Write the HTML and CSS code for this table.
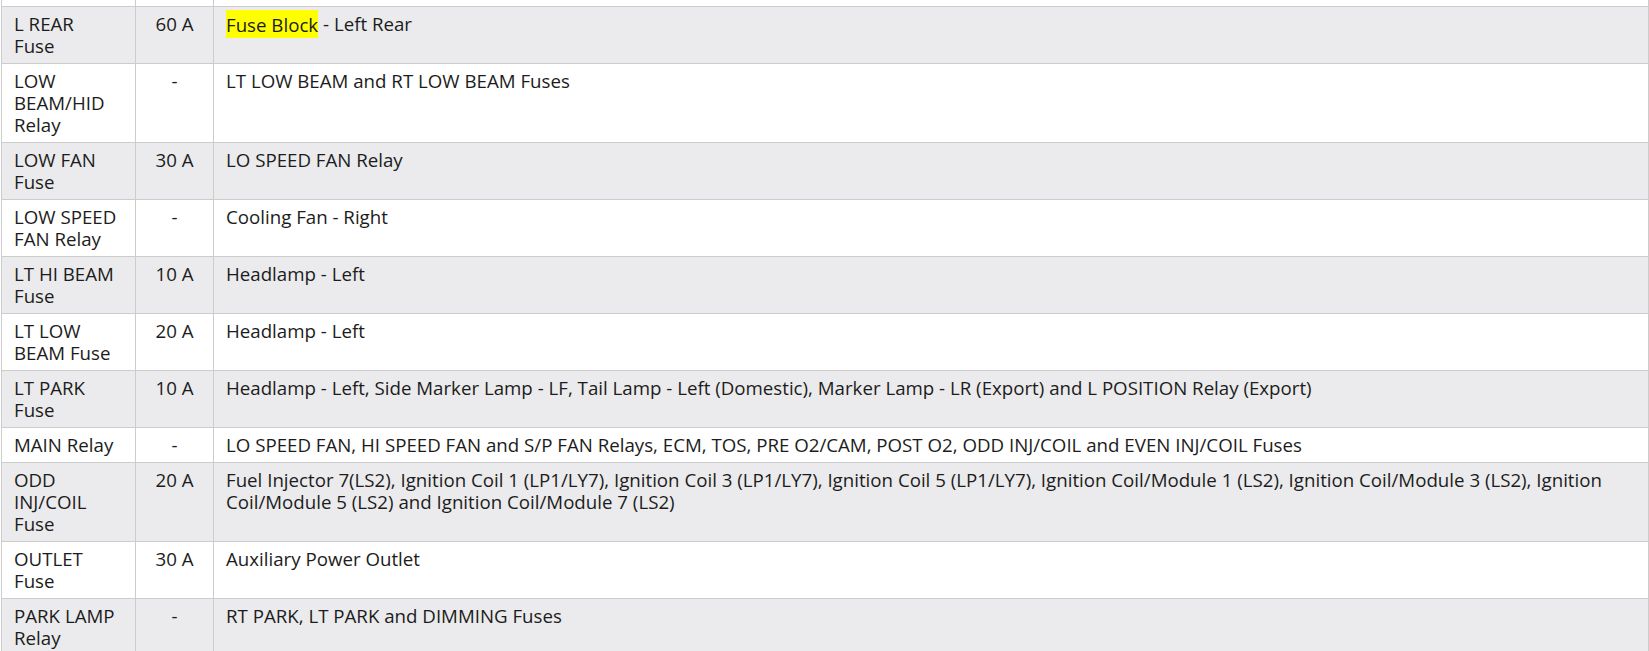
FILE: index.html
```html
<!DOCTYPE html>
<html>
<head>
<meta charset="utf-8">
<link rel="stylesheet" href="styles.css">
</head>
<body>
<table class="fuse-table">
  <colgroup>
    <col class="c-name">
    <col class="c-amp">
    <col class="c-desc">
  </colgroup>
  <tbody>
    <tr class="stub"><td></td><td></td><td></td></tr>
    <tr class="alt"><td class="name">L REAR Fuse</td><td class="amp">60 A</td><td class="desc"><mark class="hl">Fuse Block</mark> - Left Rear</td></tr>
    <tr><td class="name">LOW BEAM/HID Relay</td><td class="amp">-</td><td class="desc">LT LOW BEAM and RT LOW BEAM Fuses</td></tr>
    <tr class="alt"><td class="name">LOW FAN Fuse</td><td class="amp">30 A</td><td class="desc">LO SPEED FAN Relay</td></tr>
    <tr><td class="name">LOW SPEED FAN Relay</td><td class="amp">-</td><td class="desc">Cooling Fan - Right</td></tr>
    <tr class="alt"><td class="name">LT HI BEAM Fuse</td><td class="amp">10 A</td><td class="desc">Headlamp - Left</td></tr>
    <tr><td class="name">LT LOW BEAM Fuse</td><td class="amp">20 A</td><td class="desc">Headlamp - Left</td></tr>
    <tr class="alt"><td class="name">LT PARK Fuse</td><td class="amp">10 A</td><td class="desc">Headlamp - Left, Side Marker Lamp - LF, Tail Lamp - Left (Domestic), Marker Lamp - LR (Export) and L POSITION Relay (Export)</td></tr>
    <tr><td class="name">MAIN Relay</td><td class="amp">-</td><td class="desc">LO SPEED FAN, HI SPEED FAN and S/P FAN Relays, ECM, TOS, PRE O2/CAM, POST O2, ODD INJ/COIL and EVEN INJ/COIL Fuses</td></tr>
    <tr class="alt"><td class="name">ODD INJ/COIL Fuse</td><td class="amp">20 A</td><td class="desc">Fuel Injector 7(LS2), Ignition Coil 1 (LP1/LY7), Ignition Coil 3 (LP1/LY7), Ignition Coil 5 (LP1/LY7), Ignition Coil/Module 1 (LS2), Ignition Coil/Module 3 (LS2), Ignition Coil/Module 5 (LS2) and Ignition Coil/Module 7 (LS2)</td></tr>
    <tr><td class="name">OUTLET Fuse</td><td class="amp">30 A</td><td class="desc">Auxiliary Power Outlet</td></tr>
    <tr class="alt"><td class="name">PARK LAMP Relay</td><td class="amp">-</td><td class="desc">RT PARK, LT PARK and DIMMING Fuses</td></tr>
  </tbody>
</table>
</body>
</html>
```
FILE: styles.css
```css
html, body {
  margin: 0;
  padding: 0;
  background: #ffffff;
}
body {
  padding-left: 1px;
  font-family: "Open Sans", "Noto Sans", sans-serif;
  font-size: 18.7px;
  color: #1c1c20;
  overflow: hidden;
}
.fuse-table {
  border-collapse: collapse;
  table-layout: fixed;
  width: 1648px;
  margin-top: -1px;
}
.c-name { width: 134px; }
.c-amp { width: 78px; }
.fuse-table td {
  border: 1px solid #cccccc;
  padding: 6px 13px 6px 12px;
  line-height: 22px;
  vertical-align: top;
}
.fuse-table td.name {
  padding-right: 17px;
}
.fuse-table td.amp {
  text-align: center;
  padding-left: 4px;
  padding-right: 4px;
}
.fuse-table tr.stub td {
  height: 6px;
  padding: 0;
  line-height: 0;
}
.fuse-table tr.alt td {
  background: #ebebed;
}
.hl {
  background: #ffff00;
  color: inherit;
  padding: 1.5px 0;
}
```
